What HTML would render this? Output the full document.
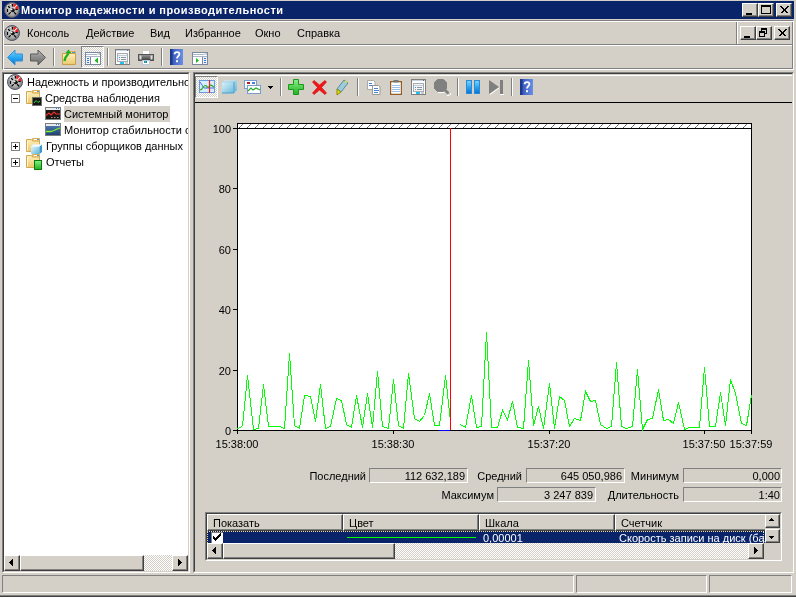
<!DOCTYPE html>
<html><head><meta charset="utf-8">
<style>
*{margin:0;padding:0;box-sizing:border-box}
html,body{width:796px;height:598px;overflow:hidden;-webkit-font-smoothing:none;background:#D4D0C8;font-family:"Liberation Sans",sans-serif;font-size:11px;color:#000}
.a{position:absolute}
.t{position:absolute;white-space:nowrap;line-height:13px;will-change:transform}
.sunk{position:absolute;border-top:1px solid #808080;border-left:1px solid #808080;border-right:1px solid #fff;border-bottom:1px solid #fff}
.sunk2{position:absolute;border-top:1px solid #404040;border-left:1px solid #404040;border-right:1px solid #D4D0C8;border-bottom:1px solid #D4D0C8}
.btn{position:absolute;background:#D4D0C8;border-top:1px solid #fff;border-left:1px solid #fff;border-right:1px solid #404040;border-bottom:1px solid #404040}
.btn>i{position:absolute;left:0;top:0;right:0;bottom:0;border-right:1px solid #808080;border-bottom:1px solid #808080}
.sep{position:absolute;width:2px;border-left:1px solid #808080;border-right:1px solid #fff}
.dith{background-color:#fff;background-image:linear-gradient(45deg,#D4D0C8 25%,transparent 25%,transparent 75%,#D4D0C8 75%),linear-gradient(45deg,#D4D0C8 25%,transparent 25%,transparent 75%,#D4D0C8 75%);background-size:2px 2px;background-position:0 0,1px 1px}
svg{position:absolute;overflow:visible}
.hdr{position:absolute;top:0;height:17px;padding-left:5px;line-height:16px;background:#D4D0C8;border-top:1px solid #fff;border-left:1px solid #fff;border-right:1px solid #404040;border-bottom:1px solid #404040;box-shadow:inset -1px -1px 0 #808080;white-space:nowrap;overflow:hidden}
</style></head><body>


<svg width="0" height="0" style="left:0;top:0">
<defs>
  <radialGradient id="gface" cx="0.45" cy="0.45" r="0.6"><stop offset="0" stop-color="#D4D4D4"/><stop offset="0.75" stop-color="#A0A0A0"/><stop offset="1" stop-color="#606060"/></radialGradient>
  <linearGradient id="gfold" x1="0" y1="0" x2="0" y2="1"><stop offset="0" stop-color="#FDF0BC"/><stop offset="1" stop-color="#EBC86F"/></linearGradient>
  <linearGradient id="gblue" x1="0" y1="0" x2="0" y2="1"><stop offset="0" stop-color="#7FD4FF"/><stop offset="0.5" stop-color="#2AA8F0"/><stop offset="1" stop-color="#0A6FCF"/></linearGradient>
  <linearGradient id="ggray" x1="0" y1="0" x2="0" y2="1"><stop offset="0" stop-color="#B8B8B8"/><stop offset="0.5" stop-color="#8C8C8C"/><stop offset="1" stop-color="#6A6A6A"/></linearGradient>
  <linearGradient id="ghelp" x1="0" y1="0" x2="1" y2="0"><stop offset="0" stop-color="#2E4FB0"/><stop offset="1" stop-color="#6A8FE8"/></linearGradient>
  <linearGradient id="gstab" x1="0" y1="0" x2="0" y2="1"><stop offset="0" stop-color="#5A84B8"/><stop offset="1" stop-color="#1E3E70"/></linearGradient>
  <linearGradient id="ggreen" x1="0" y1="0" x2="0" y2="1"><stop offset="0" stop-color="#8AF08A"/><stop offset="1" stop-color="#20B020"/></linearGradient>
  <linearGradient id="gcube" x1="0" y1="0" x2="1" y2="1"><stop offset="0" stop-color="#E8F6FC"/><stop offset="1" stop-color="#5AB4D8"/></linearGradient>
  <linearGradient id="gprn" x1="0" y1="0" x2="0" y2="1"><stop offset="0" stop-color="#9A9A9A"/><stop offset="1" stop-color="#3A3A3A"/></linearGradient>
  </defs></svg>

<!-- Title bar -->
<div class="a" style="left:2px;top:1px;width:792px;height:18px;background:#0A246A"></div>
<div class="t" style="left:21px;top:4px;color:#fff;font-weight:bold;letter-spacing:0.45px">Монитор надежности и производительности</div>
<div class="btn" style="left:742px;top:3px;width:16px;height:14px"><i></i></div>
<div class="btn" style="left:758px;top:3px;width:16px;height:14px"><i></i></div>
<div class="btn" style="left:776px;top:3px;width:16px;height:14px"><i></i></div>

<!-- Menu band -->
<div class="a" style="left:2px;top:20px;width:792px;height:50px;border-top:1px solid #808080;border-left:1px solid #808080;border-right:1px solid #fff;border-bottom:1px solid #fff;box-shadow:inset 1px 1px #fff,inset -1px -1px #808080"></div>
<div class="t" style="left:27px;top:27px">Консоль</div>
<div class="t" style="left:86px;top:27px">Действие</div>
<div class="t" style="left:150px;top:27px">Вид</div>
<div class="t" style="left:185px;top:27px">Избранное</div>
<div class="t" style="left:255px;top:27px">Окно</div>
<div class="t" style="left:297px;top:27px">Справка</div>
<div class="btn" style="left:740px;top:26px;width:16px;height:14px"><i></i></div>
<div class="btn" style="left:756px;top:26px;width:16px;height:14px"><i></i></div>
<div class="btn" style="left:774px;top:26px;width:16px;height:14px"><i></i></div>

<!-- Toolbar band -->
<div class="a" style="left:4px;top:44px;width:788px;height:1px;background:#808080"></div>
<div class="a" style="left:4px;top:45px;width:788px;height:1px;background:#fff"></div>
<div class="sep" style="left:53px;top:48px;height:18px"></div>
<div class="sep" style="left:107px;top:48px;height:18px"></div>
<div class="sep" style="left:161px;top:48px;height:18px"></div>

<!-- Tree pane -->
<div class="sunk" style="left:2px;top:72px;width:188px;height:501px"><div class="sunk2" style="left:0;top:0;width:186px;height:499px"></div></div>
<div class="a" style="left:4px;top:74px;width:184px;height:481px;background:#fff;overflow:hidden">
  <div class="t" style="left:23px;top:2px">Надежность и производительность</div>
  <div class="t" style="left:41px;top:18px">Средства наблюдения</div>
  <div class="a" style="left:60px;top:32px;width:106px;height:16px;background:#D4D0C8"></div>
  <div class="t" style="left:60px;top:34px">Системный монитор</div>
  <div class="t" style="left:60px;top:50px">Монитор стабильности системы</div>
  <div class="t" style="left:42px;top:66px">Группы сборщиков данных</div>
  <div class="t" style="left:42px;top:82px">Отчеты</div>
</div>

<!-- Right pane -->
<div class="sunk" style="left:193px;top:72px;width:601px;height:501px"><div class="sunk2" style="left:0;top:0;width:599px;height:499px"></div></div>
<div class="a" style="left:195px;top:102px;width:597px;height:1px;background:#000"></div>

<!-- Chart -->
<div class="a" style="left:237px;top:123px;width:515px;height:308px;background:#fff;border:1px solid #000"></div>
<div class="a" style="left:237px;top:128px;width:515px;height:1px;background:#000"></div>

<svg width="515" height="5" style="left:237px;top:124px" shape-rendering="crispEdges"><defs><pattern id="hp" x="0" y="0" width="8" height="4" patternUnits="userSpaceOnUse"><rect x="2" y="3" width="1" height="1" fill="#555"/><rect x="3" y="2" width="1" height="1" fill="#888"/><rect x="4" y="1" width="1" height="1" fill="#555"/><rect x="5" y="0" width="1" height="1" fill="#888"/></pattern></defs><rect x="1" y="0" width="513" height="4" fill="url(#hp)"/></svg>
<svg width="796" height="598" style="left:0;top:0" shape-rendering="crispEdges">
  <polyline fill="none" stroke="#00FF00" stroke-width="1" points="237.5,428.5 242.5,426.5 247.5,375.5 253.5,429.5 258.5,428.5 263.5,384.5 268.5,426.5 273.5,426.5 279.5,426.5 284.5,428.5 289.5,353.5 294.5,425.5 299.5,428.5 304.5,395.5 310.5,396.5 315.5,421.5 320.5,384.5 325.5,428.5 330.5,426.5 336.5,398.5 341.5,400.5 346.5,424.5 351.5,427.5 356.5,395.5 362.5,427.5 367.5,393.5 372.5,427.5 377.5,371.5 382.5,426.5 388.5,428.5 393.5,379.5 398.5,425.5 403.5,428.5 408.5,373.5 414.5,418.5 419.5,421.5 424.5,415.5 429.5,393.5 434.5,425.5 439.5,425.5 445.5,375.5 450.5,421.5"/>
  <polyline fill="none" stroke="#00FF00" stroke-width="1" points="460.5,424.5 465.5,427.5 471.5,395.5 476.5,427.5 481.5,426.5 486.5,332.5 491.5,427.5 497.5,427.5 502.5,410.5 507.5,419.5 512.5,401.5 517.5,427.5 523.5,428.5 528.5,360.5 533.5,425.5 538.5,406.5 543.5,428.5 549.5,383.5 554.5,428.5 559.5,396.5 564.5,400.5 569.5,426.5 574.5,418.5 580.5,420.5 585.5,391.5 590.5,401.5 595.5,400.5 600.5,424.5 606.5,428.5 611.5,426.5 616.5,362.5 621.5,426.5 626.5,428.5 632.5,426.5 637.5,369.5 642.5,429.5 647.5,419.5 652.5,418.5 658.5,389.5 663.5,420.5 668.5,419.5 673.5,423.5 678.5,402.5 684.5,429.5 689.5,427.5 694.5,427.5 699.5,427.5 704.5,367.5 709.5,426.5 715.5,426.5 720.5,392.5 725.5,425.5 730.5,379.5 735.5,393.5 741.5,423.5 746.5,425.5 751.5,395.5"/>
  <line x1="450.5" y1="128" x2="450.5" y2="430" stroke="#FF0000"/>
</svg>



<svg width="16" height="16" style="left:4px;top:2px"><g><circle cx="8" cy="8" r="7.5" fill="url(#gface)" stroke="#50546A"/>
    <circle cx="8" cy="8" r="6.2" fill="none" stroke="#7A7A7A" stroke-width="1" stroke-dasharray="1 1"/>
    <path d="M9.5 1.5 L12.5 2.5 L14.5 6 L14 7.5 L11 6.5 L9.5 4.5 Z" fill="#F42020"/>
    <g stroke="#000" stroke-width="1.2" stroke-linecap="square"><path d="M3.5 7.5v2M4.5 4.5l1 1M8.5 2.5v1.5M5 12l1.3-1.3M11.7 12l-1.3-1.3M12 7.5h1"/></g>
    <path d="M3 5h1M3.5 3.5h1M6 2.5h1" stroke="#fff" stroke-width="0.8"/>
    <path d="M7 9.5 L13 3" stroke="#fff" stroke-width="1.1"/>
    <circle cx="8.7" cy="8.3" r="2" fill="#111"/>
    <circle cx="7.7" cy="7.6" r="0.8" fill="#fff"/></g></svg>
<svg width="16" height="16" style="left:4px;top:25px"><g><circle cx="8" cy="8" r="7.5" fill="url(#gface)" stroke="#50546A"/>
    <circle cx="8" cy="8" r="6.2" fill="none" stroke="#7A7A7A" stroke-width="1" stroke-dasharray="1 1"/>
    <path d="M9.5 1.5 L12.5 2.5 L14.5 6 L14 7.5 L11 6.5 L9.5 4.5 Z" fill="#F42020"/>
    <g stroke="#000" stroke-width="1.2" stroke-linecap="square"><path d="M3.5 7.5v2M4.5 4.5l1 1M8.5 2.5v1.5M5 12l1.3-1.3M11.7 12l-1.3-1.3M12 7.5h1"/></g>
    <path d="M3 5h1M3.5 3.5h1M6 2.5h1" stroke="#fff" stroke-width="0.8"/>
    <path d="M7 9.5 L13 3" stroke="#fff" stroke-width="1.1"/>
    <circle cx="8.7" cy="8.3" r="2" fill="#111"/>
    <circle cx="7.7" cy="7.6" r="0.8" fill="#fff"/></g></svg>
<!-- title btn glyphs -->
<svg width="16" height="14" style="left:742px;top:3px" shape-rendering="crispEdges"><path d="M4 10h6M4 11h6" stroke="#000"/></svg>
<svg width="16" height="14" style="left:758px;top:3px" shape-rendering="crispEdges"><path d="M3.5 2.5h9v8h-9zM3 3.5h10" stroke="#000" fill="none"/></svg>
<svg width="16" height="14" style="left:776px;top:3px" shape-rendering="crispEdges"><path d="M4.5 3.5l7 7M5.5 3.5l7 7M11.5 3.5l-7 7M12.5 3.5l-7 7" stroke="#000"/></svg>
<svg width="16" height="14" style="left:740px;top:26px" shape-rendering="crispEdges"><path d="M4 10h6M4 11h6" stroke="#000"/></svg>
<svg width="16" height="14" style="left:756px;top:26px" shape-rendering="crispEdges"><path d="M5.5 2.5h5v5h-5zM5 3.5h6" stroke="#000" fill="#D4D0C8"/><path d="M3.5 5.5h5v5h-5zM3 6.5h6" stroke="#000" fill="#D4D0C8"/></svg>
<svg width="16" height="14" style="left:774px;top:26px" shape-rendering="crispEdges"><path d="M4.5 3.5l7 7M5.5 3.5l7 7M11.5 3.5l-7 7M12.5 3.5l-7 7" stroke="#000"/></svg>
<div class="a" style="left:736px;top:22px;width:1px;height:22px;background:#808080"></div>
<div class="a" style="left:737px;top:22px;width:1px;height:22px;background:#fff"></div>

<!-- main toolbar icons -->
<svg width="17" height="16" style="left:7px;top:49px"><path d="M0.5 8.5 L8 1 V5 H15.5 V12 H8 V16 Z" fill="url(#gblue)" stroke="#3A90D8" stroke-linejoin="round"/></svg>
<svg width="17" height="16" style="left:30px;top:49px"><path d="M15.5 8.5 L8 1 V5 H0.5 V12 H8 V16 Z" fill="url(#ggray)" stroke="#5A5A5A" stroke-linejoin="round"/></svg>
<svg width="16" height="16" style="left:62px;top:49px"><path d="M8.5 2.5h5v2h-5z" fill="#F6DA8C" stroke="#D6AE55"/><path d="M10 3.5h3" stroke="#4A9AE8"/><path d="M0.5 4.5h13v11h-13z" fill="url(#gfold)" stroke="#C9A04A"/><path d="M2.5 12 C3 8 5 6 6.5 4.5" fill="none" stroke="#1EB01E" stroke-width="2.4"/><path d="M3.5 4 L6.5 0.5 L9.5 4.5 Z" fill="#1EB01E"/></svg>
<div class="a dith" style="left:81px;top:46px;width:23px;height:22px;border-top:1px solid #808080;border-left:1px solid #808080;border-right:1px solid #fff;border-bottom:1px solid #fff"></div>
<svg width="16" height="13" style="left:85px;top:52px"><g><rect x="0.5" y="0.5" width="15" height="12" fill="#fff" stroke="#7A8A9E"/>
    <path d="M1 2.5h11M1 4.5h14" stroke="#A8B6C8"/>
    <path d="M12.5 2h1M14 2h1" stroke="#7A8A9E"/></g><rect x="1" y="5" width="4" height="7" fill="#EEF2F8"/><path d="M5.5 5v7" stroke="#7A8A9E"/><path d="M2 6.5h2M2 8.5h2M2 10.5h2" stroke="#3A7ACA"/><path d="M13 5.5 L9.5 8.5 L13 11.5Z" fill="#22B822"/></svg>
<svg width="16" height="16" style="left:115px;top:49px"><g><rect x="0.5" y="0.5" width="14" height="15" fill="#fff" stroke="#7E7E7E"/>
    <path d="M1 1.5h13" stroke="#C8D0DC"/><path d="M12.5 1v1" stroke="#4A70B0"/>
    <rect x="2.5" y="4.5" width="10" height="8" fill="#F4F5F6" stroke="#A4ACB4"/>
    <path d="M6 4.5h6" stroke="#A4ACB4"/><path d="M3 6.5h9" stroke="#C4CCD4"/>
    <path d="M6 8.5h5M6 10.5h5" stroke="#8A96A2"/>
    <rect x="4" y="8" width="1" height="1" fill="#1AA0F0"/><rect x="4" y="10" width="1" height="1" fill="#999"/>
    <rect x="5" y="13" width="4" height="2" fill="#20C0F0"/><rect x="10" y="13" width="3" height="2" fill="#ccc"/></g></svg>
<svg width="17" height="15" style="left:138px;top:50px">
  <rect x="4.5" y="0.5" width="7" height="4" fill="#fff" stroke="#ccc"/>
  <rect x="0.5" y="4.5" width="15" height="6" fill="url(#gprn)" stroke="#555"/>
  <rect x="1.5" y="5.5" width="2" height="4" fill="#ddd"/><rect x="12.5" y="5.5" width="2" height="4" fill="#ddd"/>
  <rect x="4.5" y="10.5" width="7" height="4" fill="#fff" stroke="#B8C8E0"/>
  <rect x="6" y="11" width="1.5" height="2" fill="#1A8AE8"/><rect x="7.5" y="11" width="1.5" height="2" fill="#1A9A3A"/>
</svg>
<svg width="13" height="16" style="left:170px;top:49px"><g><rect x="0" y="0" width="13" height="16" fill="url(#ghelp)"/>
    <rect x="0" y="0" width="2.5" height="16" fill="#1C3A8C"/>
    <path d="M4.6 5.2 C4.6 2.6 9.4 2.4 9.4 5 C9.4 7 7 7.2 7 9.6" fill="none" stroke="#fff" stroke-width="1.8"/>
    <rect x="6" y="11.2" width="2" height="2" fill="#fff"/></g></svg>
<svg width="16" height="13" style="left:192px;top:52px"><g><rect x="0.5" y="0.5" width="15" height="12" fill="#fff" stroke="#7A8A9E"/>
    <path d="M1 2.5h11M1 4.5h14" stroke="#A8B6C8"/>
    <path d="M12.5 2h1M14 2h1" stroke="#7A8A9E"/></g><rect x="11" y="5" width="4" height="7" fill="#EEF2F8"/><path d="M10.5 5v7" stroke="#7A8A9E"/><path d="M12 6.5h2M12 8.5h2M12 10.5h2" stroke="#3A7ACA"/><path d="M4 6 L7 8.5 L4 11Z" fill="#22B822"/></svg>

<!-- tree icons -->
<svg width="16" height="16" style="left:7px;top:74px"><g><circle cx="8" cy="8" r="7.5" fill="url(#gface)" stroke="#50546A"/>
    <circle cx="8" cy="8" r="6.2" fill="none" stroke="#7A7A7A" stroke-width="1" stroke-dasharray="1 1"/>
    <path d="M9.5 1.5 L12.5 2.5 L14.5 6 L14 7.5 L11 6.5 L9.5 4.5 Z" fill="#F42020"/>
    <g stroke="#000" stroke-width="1.2" stroke-linecap="square"><path d="M3.5 7.5v2M4.5 4.5l1 1M8.5 2.5v1.5M5 12l1.3-1.3M11.7 12l-1.3-1.3M12 7.5h1"/></g>
    <path d="M3 5h1M3.5 3.5h1M6 2.5h1" stroke="#fff" stroke-width="0.8"/>
    <path d="M7 9.5 L13 3" stroke="#fff" stroke-width="1.1"/>
    <circle cx="8.7" cy="8.3" r="2" fill="#111"/>
    <circle cx="7.7" cy="7.6" r="0.8" fill="#fff"/></g></svg>
<div class="a" style="left:11px;top:94px;width:9px;height:9px;border:1px solid #808080;background:#fff"></div>
<div class="a" style="left:13px;top:98px;width:5px;height:1px;background:#000"></div>
<svg width="17" height="17" style="left:26px;top:90px"><g><path d="M6.5 0.5h7v3h-7z" fill="#F2D27E" stroke="#D6AE55"/>
    <path d="M8 1.5h4" stroke="#fff"/><path d="M11 1.5h2" stroke="#4A9AE8"/>
    <path d="M0.5 1.5h5l1 1.5h7v10.5h-13z" fill="url(#gfold)" stroke="#D4A84E"/>
    <path d="M1.5 3v9.5" stroke="#FFF8DC"/></g><rect x="6.5" y="7.5" width="9" height="8" fill="#1A1410" stroke="#6A7070"/><path d="M8 13 L10 10.5 L12 12.5 L14 11" fill="none" stroke="#2ED84A"/></svg>
<svg width="16" height="14" style="left:45px;top:107px"><rect x="0.5" y="0.5" width="15" height="12" fill="#1E1612" stroke="#7A8080"/><rect x="1" y="1" width="14" height="2" fill="#E8ECF0"/><path d="M11 1.5h1M13 1.5h1" stroke="#4A7ACA"/><path d="M1 8.5 L4 6 L6 8 L9 5 L11 7 H15" fill="none" stroke="#E83030" stroke-width="1.2"/><path d="M6 10.5h1.5M9 10.5h1.5M12 10.5h1.5" stroke="#999"/></svg>
<svg width="16" height="14" style="left:45px;top:123px"><rect x="0.5" y="0.5" width="15" height="12" fill="url(#gstab)" stroke="#7A8080"/><rect x="1" y="1" width="14" height="2" fill="#E8ECF0"/><path d="M11 1.5h1M13 1.5h1" stroke="#4A7ACA"/><path d="M1 8.5 H6 L9 7.5 L12 6 L15 5" fill="none" stroke="#7CF028" stroke-width="1.3"/></svg>
<div class="a" style="left:11px;top:142px;width:9px;height:9px;border:1px solid #808080;background:#fff"></div>
<div class="a" style="left:13px;top:146px;width:5px;height:1px;background:#000"></div>
<div class="a" style="left:15px;top:144px;width:1px;height:5px;background:#000"></div>
<svg width="17" height="17" style="left:26px;top:138px"><g><path d="M6.5 0.5h7v3h-7z" fill="#F2D27E" stroke="#D6AE55"/>
    <path d="M8 1.5h4" stroke="#fff"/><path d="M11 1.5h2" stroke="#4A9AE8"/>
    <path d="M0.5 1.5h5l1 1.5h7v10.5h-13z" fill="url(#gfold)" stroke="#D4A84E"/>
    <path d="M1.5 3v9.5" stroke="#FFF8DC"/></g><path d="M5 8.5 L7 6.5 H16 V14 L13.5 16 H5 Z" fill="#D8EEF8"/><path d="M5 8.5 H13.5 V16 H5 Z" fill="url(#gcube)"/><path d="M13.5 8.5 L16 6.5 V14 L13.5 16 Z" fill="#3A98C8"/><path d="M5 8.5 L7 6.5 H16 L13.5 8.5 Z" fill="#F4FAFE"/></svg>
<div class="a" style="left:11px;top:158px;width:9px;height:9px;border:1px solid #808080;background:#fff"></div>
<div class="a" style="left:13px;top:162px;width:5px;height:1px;background:#000"></div>
<div class="a" style="left:15px;top:160px;width:1px;height:5px;background:#000"></div>
<svg width="17" height="17" style="left:26px;top:154px"><g><path d="M6.5 0.5h7v3h-7z" fill="#F2D27E" stroke="#D6AE55"/>
    <path d="M8 1.5h4" stroke="#fff"/><path d="M11 1.5h2" stroke="#4A9AE8"/>
    <path d="M0.5 1.5h5l1 1.5h7v10.5h-13z" fill="url(#gfold)" stroke="#D4A84E"/>
    <path d="M1.5 3v9.5" stroke="#FFF8DC"/></g><rect x="8.5" y="6.5" width="7" height="9" fill="url(#ggreen)" stroke="#0A7A0A"/></svg>
<!-- tree hscroll -->
<div class="a dith" style="left:4px;top:555px;width:184px;height:16px"></div>
<div class="btn" style="left:4px;top:555px;width:16px;height:16px"><i></i></div>
<div class="btn" style="left:20px;top:555px;width:124px;height:16px"><i></i></div>
<div class="btn" style="left:172px;top:555px;width:16px;height:16px"><i></i></div>
<svg width="16" height="16" style="left:4px;top:555px"><path d="M8.5 4v7M7.5 5v5M6.5 6v3M5.5 7v1" stroke="#000" shape-rendering="crispEdges"/></svg>
<svg width="16" height="16" style="left:172px;top:555px"><path d="M6.5 4v7M7.5 5v5M8.5 6v3M9.5 7v1" stroke="#000" shape-rendering="crispEdges"/></svg>

<!-- right toolbar -->
<div class="a" style="left:195px;top:75px;width:597px;height:1px;background:#fff"></div>
<div class="a dith" style="left:195px;top:76px;width:23px;height:22px;border-top:1px solid #808080;border-left:1px solid #808080;border-right:1px solid #fff;border-bottom:1px solid #fff"></div>
<svg width="16" height="13" style="left:199px;top:80px"><rect x="0.5" y="0.5" width="15" height="12" fill="#D8ECFC" stroke="#6A9AE0"/><path d="M1 2 L5 8 H9 M9 8 H15" fill="none" stroke="#4A70D8"/><path d="M1 9.5 C3 11 4 5 6.5 5.5 C8 6 9 9 10.5 6 C12 4 13 6 15 7" fill="none" stroke="#2AAA2A" stroke-width="1.2"/><path d="M10.5 0v13" stroke="#E82020" stroke-width="1.2"/></svg>
<svg width="17" height="14" style="left:221px;top:80px"><path d="M1 2 L4 0.5 H16 V10 L13 13 H1 Z" fill="url(#gcube)"/><path d="M13 2 V13 M1 2 H13 L16 0.5" fill="none" stroke="#9AD0EA"/><path d="M13 2 V13 H1" fill="none" stroke="#4A9ACA"/></svg>
<svg width="17" height="14" style="left:244px;top:80px"><rect x="0.5" y="0.5" width="12" height="8" fill="#fff" stroke="#7A9AD0"/><rect x="3" y="2" width="3" height="2" fill="#B02030"/><rect x="8" y="2" width="3" height="2" fill="#4A80E0"/><rect x="3.5" y="5.5" width="13" height="8" fill="#fff" stroke="#7A9AD0"/><path d="M4 11 L7 8 L9 10 L12 8 L16 10" fill="none" stroke="#2AAA2A" stroke-width="1.2"/></svg>
<svg width="6" height="4" style="left:268px;top:86px" shape-rendering="crispEdges"><path d="M0 0.5h5M1 1.5h3M2 2.5h1" stroke="#000"/></svg>
<div class="sep" style="left:280px;top:78px;height:18px"></div>
<svg width="17" height="17" style="left:288px;top:79px"><path d="M5.5 0.5h5v5h5v5h-5v5h-5v-5h-5v-5h5z" fill="url(#ggreen)" stroke="#189A18"/></svg>
<svg width="17" height="17" style="left:311px;top:79px"><path d="M3 1.5 L8.5 6 L14 1.5 L15.5 3 L10.5 8.5 L15.5 14 L14 15.5 L8.5 11 L3 15.5 L1.5 14 L6.5 8.5 L1.5 3 Z" fill="#F01818" stroke="#C00" stroke-width="0.6"/></svg>
<svg width="13" height="17" style="left:336px;top:79px"><path d="M8 1 L12 4 L5 13 L1 10 Z" fill="#9ACCDC" stroke="#5A8A9A"/><path d="M1 10 L5 13 L1 16 Z" fill="#E8E010" stroke="#8A8A00"/><path d="M9 2 L11 3.5" stroke="#E8E010" stroke-width="1.5"/></svg>
<div class="sep" style="left:357px;top:78px;height:18px"></div>
<svg width="14" height="16" style="left:367px;top:80px"><path d="M0.5 0.5h6l1.5 1.5v7.5h-7.5z" fill="#fff" stroke="#aaa"/><path d="M2 3.5h3M2 5.5h4" stroke="#4A80D0"/><path d="M5.5 5.5h6l1.5 1.5v7.5h-7.5z" fill="#fff" stroke="#999"/><path d="M7 8.5h4M7 10.5h5M7 12.5h4" stroke="#4A80D0"/></svg>
<svg width="13" height="15" style="left:390px;top:80px"><rect x="0.5" y="1.5" width="11" height="13" fill="#fff" stroke="#8A5220"/><rect x="1" y="2" width="10" height="12" fill="none" stroke="#B07A40" stroke-width="0.6"/><path d="M2 5.5h8M2 7.5h8M2 9.5h8M2 11.5h8" stroke="#9CC0E8"/><rect x="3.5" y="0" width="5" height="2.5" fill="#777"/></svg>
<svg width="16" height="16" style="left:411px;top:79px"><g><rect x="0.5" y="0.5" width="14" height="15" fill="#fff" stroke="#7E7E7E"/>
    <path d="M1 1.5h13" stroke="#C8D0DC"/><path d="M12.5 1v1" stroke="#4A70B0"/>
    <rect x="2.5" y="4.5" width="10" height="8" fill="#F4F5F6" stroke="#A4ACB4"/>
    <path d="M6 4.5h6" stroke="#A4ACB4"/><path d="M3 6.5h9" stroke="#C4CCD4"/>
    <path d="M6 8.5h5M6 10.5h5" stroke="#8A96A2"/>
    <rect x="4" y="8" width="1" height="1" fill="#1AA0F0"/><rect x="4" y="10" width="1" height="1" fill="#999"/>
    <rect x="5" y="13" width="4" height="2" fill="#20C0F0"/><rect x="10" y="13" width="3" height="2" fill="#ccc"/></g></svg>
<svg width="17" height="17" style="left:434px;top:79px"><path d="M3.5 0.5h6l3 3v6l-3 3h-6l-3-3v-6z" fill="#808080" stroke="#808080"/><path d="M10 10 L14.5 14.5" stroke="#808080" stroke-width="2.6"/><path d="M13 16.5h2.5M16.5 14v2" stroke="#fff"/><path d="M4 13.5h6" stroke="#fff"/></svg>
<div class="sep" style="left:457px;top:78px;height:18px"></div>
<svg width="15" height="15" style="left:466px;top:80px"><rect x="0.5" y="0.5" width="5" height="13" fill="url(#gblue)" stroke="#2A8AD8"/><rect x="8.5" y="0.5" width="5" height="13" fill="url(#gblue)" stroke="#2A8AD8"/></svg>
<svg width="16" height="16" style="left:489px;top:80px"><path d="M0 0 L10 7 L0 14Z" fill="#808080"/><rect x="11" y="0" width="3" height="14" fill="#808080"/><path d="M1 14.5 L10 8M11 14.5h4" stroke="#fff"/></svg>
<div class="sep" style="left:511px;top:78px;height:18px"></div>
<svg width="13" height="16" style="left:520px;top:79px"><g><rect x="0" y="0" width="13" height="16" fill="url(#ghelp)"/>
    <rect x="0" y="0" width="2.5" height="16" fill="#1C3A8C"/>
    <path d="M4.6 5.2 C4.6 2.6 9.4 2.4 9.4 5 C9.4 7 7 7.2 7 9.6" fill="none" stroke="#fff" stroke-width="1.8"/>
    <rect x="6" y="11.2" width="2" height="2" fill="#fff"/></g></svg>

<!-- Chart labels -->
<div class="t" style="left:180px;top:123px;width:51px;text-align:right">100</div>
<div class="t" style="left:180px;top:183px;width:51px;text-align:right">80</div>
<div class="t" style="left:180px;top:244px;width:51px;text-align:right">60</div>
<div class="t" style="left:180px;top:304px;width:51px;text-align:right">40</div>
<div class="t" style="left:180px;top:365px;width:51px;text-align:right">20</div>
<div class="t" style="left:180px;top:425px;width:51px;text-align:right">0</div>
<div class="a" style="left:233px;top:128px;width:4px;height:1px;background:#000"></div>
<div class="a" style="left:233px;top:188px;width:4px;height:1px;background:#000"></div>
<div class="a" style="left:233px;top:249px;width:4px;height:1px;background:#000"></div>
<div class="a" style="left:233px;top:309px;width:4px;height:1px;background:#000"></div>
<div class="a" style="left:233px;top:370px;width:4px;height:1px;background:#000"></div>
<div class="a" style="left:233px;top:430px;width:4px;height:1px;background:#000"></div>
<div class="a" style="left:237px;top:431px;width:1px;height:3px;background:#000"></div>
<div class="a" style="left:393px;top:431px;width:1px;height:3px;background:#000"></div>
<div class="a" style="left:549px;top:431px;width:1px;height:3px;background:#000"></div>
<div class="a" style="left:704px;top:431px;width:1px;height:3px;background:#000"></div>
<div class="a" style="left:751px;top:431px;width:1px;height:3px;background:#000"></div>
<div class="t" style="left:187px;top:438px;width:100px;text-align:center">15:38:00</div>
<div class="t" style="left:343px;top:438px;width:100px;text-align:center">15:38:30</div>
<div class="t" style="left:499px;top:438px;width:100px;text-align:center">15:37:20</div>
<div class="t" style="left:654px;top:438px;width:100px;text-align:center">15:37:50</div>
<div class="t" style="left:701px;top:438px;width:100px;text-align:center">15:37:59</div>
<div class="a" style="left:439px;top:430px;width:11px;height:1px;background:#0000FF"></div>

<!-- Stats -->
<div class="t" style="left:260px;top:470px;width:106px;text-align:right">Последний</div>
<div class="sunk" style="left:369px;top:468px;width:99px;height:15px"></div>
<div class="t" style="left:369px;top:470px;width:96px;text-align:right">112 632,189</div>
<div class="t" style="left:420px;top:470px;width:102px;text-align:right">Средний</div>
<div class="sunk" style="left:526px;top:468px;width:99px;height:15px"></div>
<div class="t" style="left:526px;top:470px;width:96px;text-align:right">645 050,986</div>
<div class="t" style="left:578px;top:470px;width:101px;text-align:right">Минимум</div>
<div class="sunk" style="left:683px;top:468px;width:99px;height:15px"></div>
<div class="t" style="left:683px;top:470px;width:97px;text-align:right">0,000</div>
<div class="t" style="left:392px;top:489px;width:102px;text-align:right">Максимум</div>
<div class="sunk" style="left:497px;top:487px;width:99px;height:15px"></div>
<div class="t" style="left:497px;top:489px;width:96px;text-align:right">3 247 839</div>
<div class="t" style="left:578px;top:489px;width:101px;text-align:right">Длительность</div>
<div class="sunk" style="left:683px;top:487px;width:99px;height:15px"></div>
<div class="t" style="left:683px;top:489px;width:97px;text-align:right">1:40</div>


<!-- Counter list -->
<div class="sunk" style="left:205px;top:512px;width:577px;height:49px"><div class="sunk2" style="left:0;top:0;width:575px;height:47px"></div></div>
<div class="a" style="left:207px;top:514px;width:558px;height:17px;overflow:hidden">
  <div class="hdr" style="left:0;width:136px">Показать</div>
  <div class="hdr" style="left:136px;width:136px">Цвет</div>
  <div class="hdr" style="left:272px;width:136px">Шкала</div>
  <div class="hdr" style="left:408px;width:160px">Счетчик</div>
</div>
<div class="a" style="left:207px;top:531px;width:558px;height:12px;background:#0A246A;overflow:hidden">
  <div class="a" style="left:0;top:0;width:557px;height:14px;border:1px dotted #F5DB95"></div>
  <div class="a" style="left:4px;top:1px;width:12px;height:11px;background:#fff;border-left:1px solid #808080;border-top:1px solid #808080"></div>
  <svg width="12" height="11" style="left:4px;top:1px"><path d="M2.5 5.5 L4.5 7.5 L9.5 2.5 M2.5 6.5 L4.5 8.5 L9.5 3.5 M2.5 4.5 L4.5 6.5 L9.5 1.5" stroke="#000" fill="none" shape-rendering="crispEdges"/></svg>
  <div class="a" style="left:140px;top:6px;width:129px;height:1px;background:#00FF00"></div>
  <div class="t" style="left:276px;top:1px;color:#fff">0,00001</div>
  <div class="t" style="left:412px;top:1px;color:#fff">Скорость записи на диск (байт/с)</div>
</div>
<!-- vscroll -->
<div class="btn" style="left:765px;top:514px;width:15px;height:14px"><i></i></div>
<div class="btn" style="left:765px;top:529px;width:15px;height:14px"><i></i></div>
<svg width="15" height="14" style="left:765px;top:514px" shape-rendering="crispEdges"><path d="M4 6.5h5M5 5.5h3M6 4.5h1" stroke="#000"/></svg>
<svg width="15" height="14" style="left:765px;top:529px" shape-rendering="crispEdges"><path d="M4 7.5h5M5 8.5h3M6 9.5h1" stroke="#000"/></svg>
<!-- hscroll -->
<div class="a dith" style="left:207px;top:543px;width:557px;height:16px"></div>
<div class="btn" style="left:207px;top:543px;width:16px;height:16px"><i></i></div>
<div class="btn" style="left:223px;top:543px;width:172px;height:16px"><i></i></div>
<div class="btn" style="left:748px;top:543px;width:16px;height:16px"><i></i></div>
<div class="a" style="left:764px;top:543px;width:15px;height:16px;background:#D4D0C8"></div>
<svg width="16" height="16" style="left:207px;top:543px"><path d="M8.5 4v7M7.5 5v5M6.5 6v3M5.5 7v1" stroke="#000" shape-rendering="crispEdges"/></svg>
<svg width="16" height="16" style="left:748px;top:543px"><path d="M6.5 4v7M7.5 5v5M8.5 6v3M9.5 7v1" stroke="#000" shape-rendering="crispEdges"/></svg>

<!-- Status bar -->
<div class="sunk" style="left:2px;top:575px;width:572px;height:18px"></div>
<div class="sunk" style="left:576px;top:575px;width:131px;height:18px"></div>
<div class="sunk" style="left:709px;top:575px;width:83px;height:18px"></div>
<div class="a" style="left:0;top:595px;width:796px;height:1px;background:#808080"></div>
<div class="a" style="left:0;top:596px;width:796px;height:1px;background:#404040"></div>
<div class="a" style="left:0;top:597px;width:796px;height:1px;background:#fff"></div>

</body></html>
